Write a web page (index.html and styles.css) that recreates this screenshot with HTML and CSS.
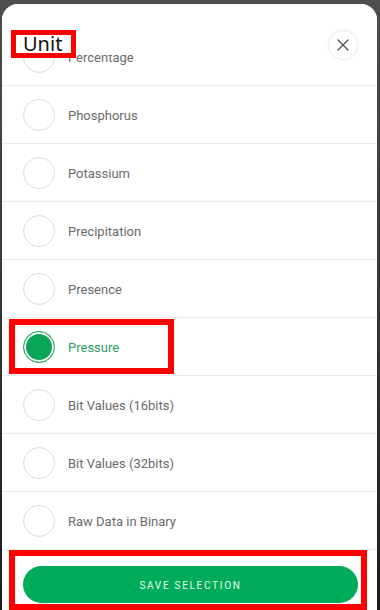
FILE: index.html
```html
<!DOCTYPE html>
<html lang="en">
<head>
    <meta charset="UTF-8">
    <meta name="viewport" content="width=device-width, initial-scale=1.0">
    <title>Unit</title>
    <link rel="stylesheet" href="styles.css">
</head>
<body>
    <div class="sheet">
        <div class="sheet-header">
            <h2 class="sheet-title">Unit</h2>
            <button class="close-btn" aria-label="Close">
                <svg width="12" height="12" viewBox="0 0 12 12">
                    <path d="M1 1 L11 11 M11 1 L1 11" stroke="#555" stroke-width="1.4" stroke-linecap="round" fill="none"/>
                </svg>
            </button>
        </div>

        <div class="option-list">
            <div class="option"><div class="option-body"><span class="radio"></span><span class="option-label">Percentage</span></div></div>
            <div class="option"><div class="option-body"><span class="radio"></span><span class="option-label">Phosphorus</span></div></div>
            <div class="option"><div class="option-body"><span class="radio"></span><span class="option-label">Potassium</span></div></div>
            <div class="option"><div class="option-body"><span class="radio"></span><span class="option-label">Precipitation</span></div></div>
            <div class="option"><div class="option-body"><span class="radio"></span><span class="option-label">Presence</span></div></div>
            <div class="option selected"><div class="option-body"><span class="radio"></span><span class="option-label">Pressure</span></div></div>
            <div class="option"><div class="option-body"><span class="radio"></span><span class="option-label">Bit Values (16bits)</span></div></div>
            <div class="option"><div class="option-body"><span class="radio"></span><span class="option-label">Bit Values (32bits)</span></div></div>
            <div class="option"><div class="option-body"><span class="radio"></span><span class="option-label">Raw Data in Binary</span></div></div>
        </div>

        <div class="sheet-footer">
            <button class="save-btn">Save Selection</button>
        </div>
    </div>
</body>
</html>
```

FILE: styles.css
```css
html, body {
    height: 100%;
}

body {
    margin: 0;
    overflow: hidden;
    background: linear-gradient(#4e4e4e, #1c1c1c);
    font-family: Roboto, "Noto Sans", Arial, sans-serif;
}

.sheet {
    margin: 4px 3px 0 2px;
    height: 606px;
    background: white;
    border-radius: 16px 16px 0 0;
    overflow: hidden;
}

.sheet-header {
    position: relative;
    z-index: 1;
    height: 51px;
    box-sizing: border-box;
    padding: 26px 19px 0 14px;
    display: flex;
    justify-content: space-between;
    align-items: flex-start;
    background: white;
}

.sheet-title {
    margin: 5px 0 0 0;
    width: 55px;
    height: 18px;
    box-sizing: border-box;
    padding-left: 7px;
    font-family: "Noto Sans", "Open Sans", sans-serif;
    font-size: 20px;
    font-weight: normal;
    line-height: 17px;
    color: #111;
    outline: 5px solid #ff0000;
}

.close-btn {
    width: 30px;
    height: 30px;
    padding: 0;
    border: 1px solid #ececec;
    border-radius: 50%;
    background: white;
    box-shadow: 0 0 3px rgba(0, 0, 0, 0.06);
    display: flex;
    align-items: center;
    justify-content: center;
}

.option-list {
    margin-top: -27px;
}

.option {
    height: 58px;
    box-sizing: border-box;
    border-bottom: 1px solid #ebebeb;
    padding-left: 13px;
    display: flex;
    align-items: center;
}

.option-body {
    height: 43px;
    padding: 0 8px;
    display: flex;
    align-items: center;
    gap: 13px;
}

.radio {
    width: 32px;
    height: 32px;
    box-sizing: border-box;
    border: 1px solid #dcdcdc;
    border-radius: 50%;
}

.option-label {
    padding-top: 2px;
    font-size: 13px;
    color: #6a6a6a;
}

.option.selected .option-body {
    padding-right: 49px;
    outline: 6px solid #ff0000;
}

.option.selected .radio {
    border-color: #2fa567;
    background: #0aa656;
    box-shadow: inset 0 0 0 2px white;
}

.option.selected .option-label {
    color: #2e9d62;
}

.sheet-footer {
    margin: 6px 16px 0 13px;
    padding: 10px 3px 1px 8px;
    outline: 6px solid #ff0000;
}

.save-btn {
    display: block;
    width: 100%;
    height: 37px;
    padding-top: 2px;
    border: none;
    border-radius: 19px;
    background: #00ac5a;
    color: #e9f7ee;
    font-family: Roboto, sans-serif;
    font-size: 10px;
    font-weight: normal;
    letter-spacing: 1.7px;
    text-transform: uppercase;
}
```
